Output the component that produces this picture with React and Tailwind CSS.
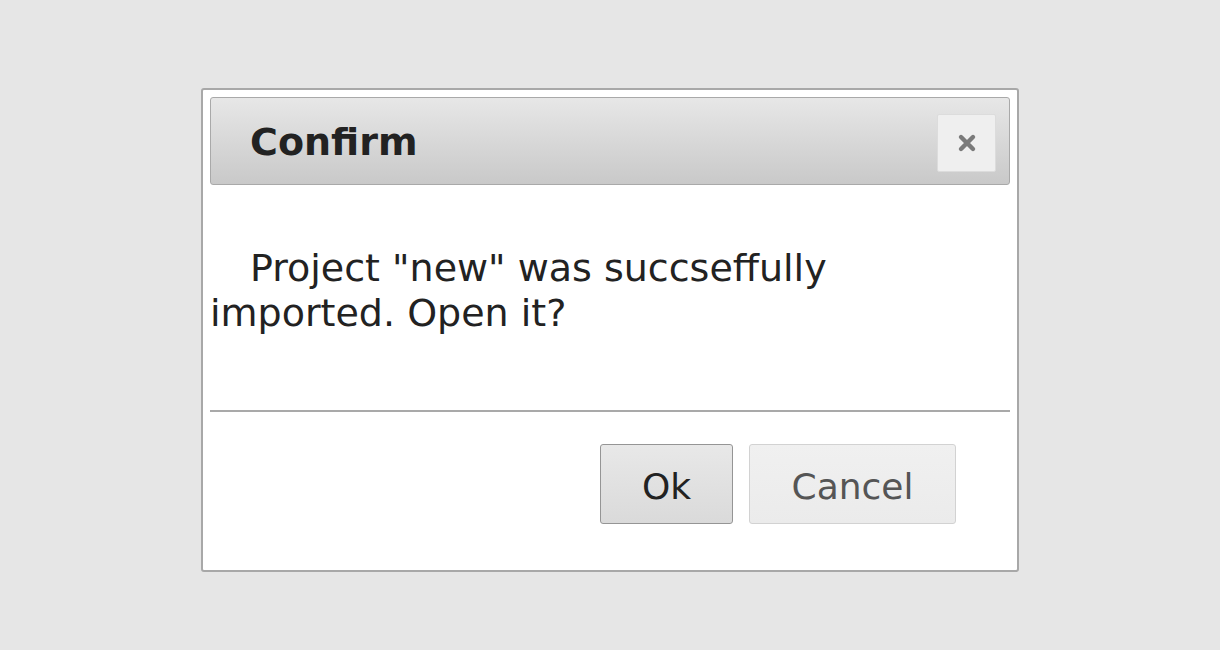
import React from 'react';

const CloseIcon = () => (
  <svg width="20" height="20" viewBox="0 0 20 20">
    <path d="M4 4 L16 16 M16 4 L4 16" stroke="#7a7a7a" strokeWidth="4.4" strokeLinecap="round" />
  </svg>
);

const ConfirmDialog = () => {
  return (
    <div className="w-[818px] h-[484px] flex flex-col bg-white border-2 border-[#a8a8a8] rounded-[3px] p-[7px] font-['DejaVu_Sans',sans-serif]">
      <div className="h-[88px] flex items-center justify-between pl-[39px] pr-[13px] pt-[3px] border border-[#a9a9a9] rounded-[3px] bg-gradient-to-b from-[#e7e7e7] to-[#c9c9c9]">
        <span className="text-[38px] font-bold text-[#222]">Confirm</span>
        <button className="w-[59px] h-[58px] flex items-center justify-center bg-[#efefef] border border-[#dcdcdc] rounded-[2px]">
          <CloseIcon />
        </button>
      </div>

      <div className="pt-[61px] h-[225px]">
        <p className="text-[38px] leading-[45px] text-[#222] indent-[40px]">
          Project "new" was succseffully imported. Open it?
        </p>
      </div>

      <div className="h-[2px] bg-[#a9a9a9]" />

      <div className="flex justify-end gap-[16px] pt-[32px] pr-[54px]">
        <button className="w-[133px] h-[80px] pt-[6px] text-[36px] text-[#222] border border-[#959595] rounded-[3px] bg-gradient-to-b from-[#e8e8e8] to-[#dadada]">
          Ok
        </button>
        <button className="w-[207px] h-[80px] pt-[6px] text-[36px] text-[#555] border border-[#d2d2d2] rounded-[3px] bg-gradient-to-b from-[#f0f0f0] to-[#ebebeb]">
          Cancel
        </button>
      </div>
    </div>
  );
};

export default function App() {
  return (
    <div className="w-[1220px] h-[650px] bg-[#e6e6e6] flex justify-center pt-[88px]">
      <ConfirmDialog />
    </div>
  );
}
